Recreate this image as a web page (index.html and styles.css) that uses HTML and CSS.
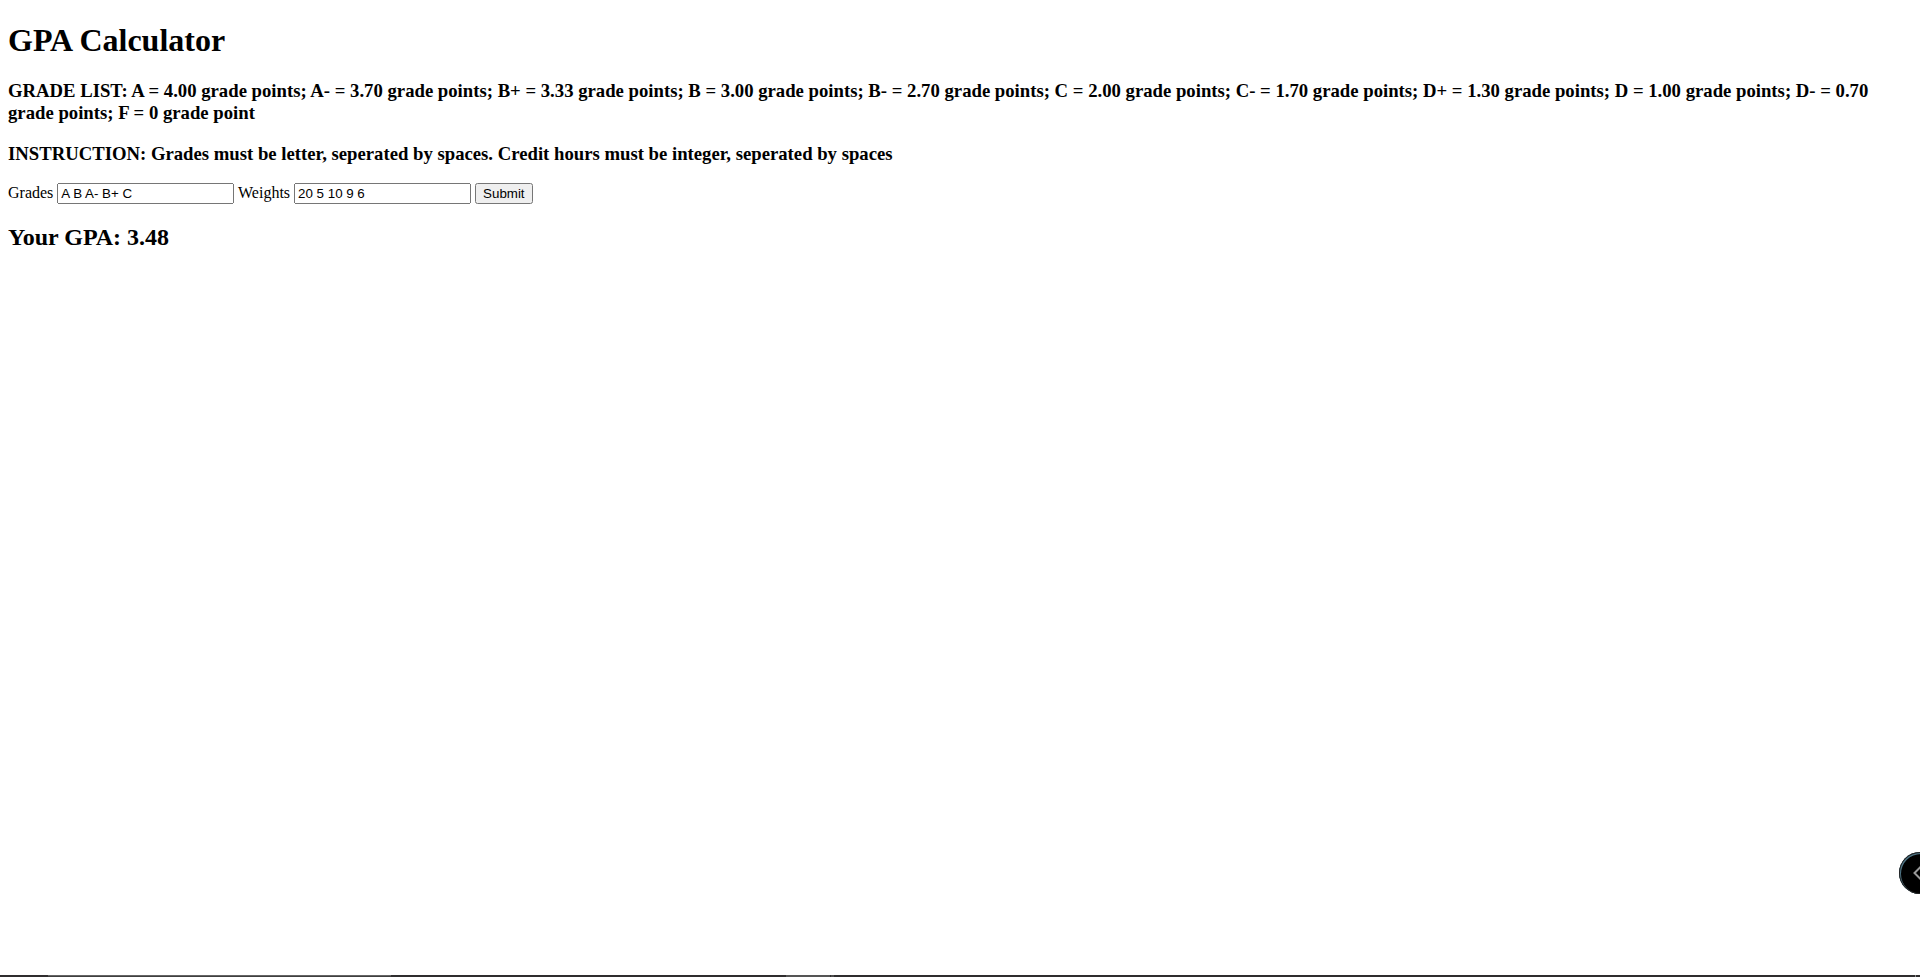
FILE: index.html
```html
<!DOCTYPE html>
<html lang="en">
<head>
  <meta charset="UTF-8">
  <title>GPA Calculator</title>
  <link rel="stylesheet" href="styles.css">
</head>
<body>

  <h1>GPA Calculator</h1>

  <h3>GRADE LIST: A = 4.00 grade points; A- = 3.70 grade points; B+ = 3.33 grade points; B = 3.00 grade points; B- = 2.70 grade points; C = 2.00 grade points; C- = 1.70 grade points; D+ = 1.30 grade points; D = 1.00 grade points; D- = 0.70 grade points; F = 0 grade point</h3>
  <h3>INSTRUCTION: Grades must be letter, seperated by spaces. Credit hours must be integer, seperated by spaces</h3>

  <form id="gpaForm">
    <label for="grades">Grades</label>
    <input type="text" id="grades" value="A B A- B+ C">
    <label for="weights">Weights</label>
    <input type="text" id="weights" value="20 5 10 9 6">
    <button type="submit">Submit</button>
  </form>

  <h2 id="result">Your GPA: 3.48</h2>

  <div class="side-toggle">
    <svg width="42" height="42" viewBox="0 0 42 42">
      <path d="M22.5 14 L15.5 21 L22.5 28" fill="none" stroke="#999" stroke-width="2"/>
    </svg>
  </div>

  <div class="bottom-bar">
    <span class="search"></span>
    <span class="active"></span>
    <span class="stack"></span>
    <span class="edge"></span>
  </div>

</body>
</html>
```
FILE: styles.css
```css
body {
  margin: 0 8px;
  font-family: "Liberation Serif", "Times New Roman", serif;
  background-color: #fff;
  color: #000;
}
h1 {
  margin: 22px 0 21px;
}
input, button {
  font-family: "Liberation Sans", Arial, sans-serif;
}
input {
  width: 169px;
}
.side-toggle {
  position: fixed;
  right: -21px;
  top: 852px;
  width: 42px;
  height: 42px;
  border-radius: 50%;
  background: #000;
  box-shadow: inset 0 0 0 1px #222, inset 1px 1px 0 1px #4d7485;
}
.side-toggle svg {
  display: block;
}
.bottom-bar {
  position: fixed;
  left: 0;
  right: 0;
  bottom: 0;
  display: flex;
  height: 2px;
  background: #2f2d2e;
}
.search {
  width: 343px;
  margin-left: 48px;
  box-sizing: border-box;
  border-top: 1px solid #656565;
  background: #3f3f3f;
}
.active {
  width: 44px;
  margin-left: 395px;
  background: #555;
}
.stack {
  width: 3px;
  margin-left: 1px;
  background: #4c4c4c;
}
.edge {
  width: 1px;
  margin-left: auto;
  margin-right: 4px;
  background: #888;
}
```
